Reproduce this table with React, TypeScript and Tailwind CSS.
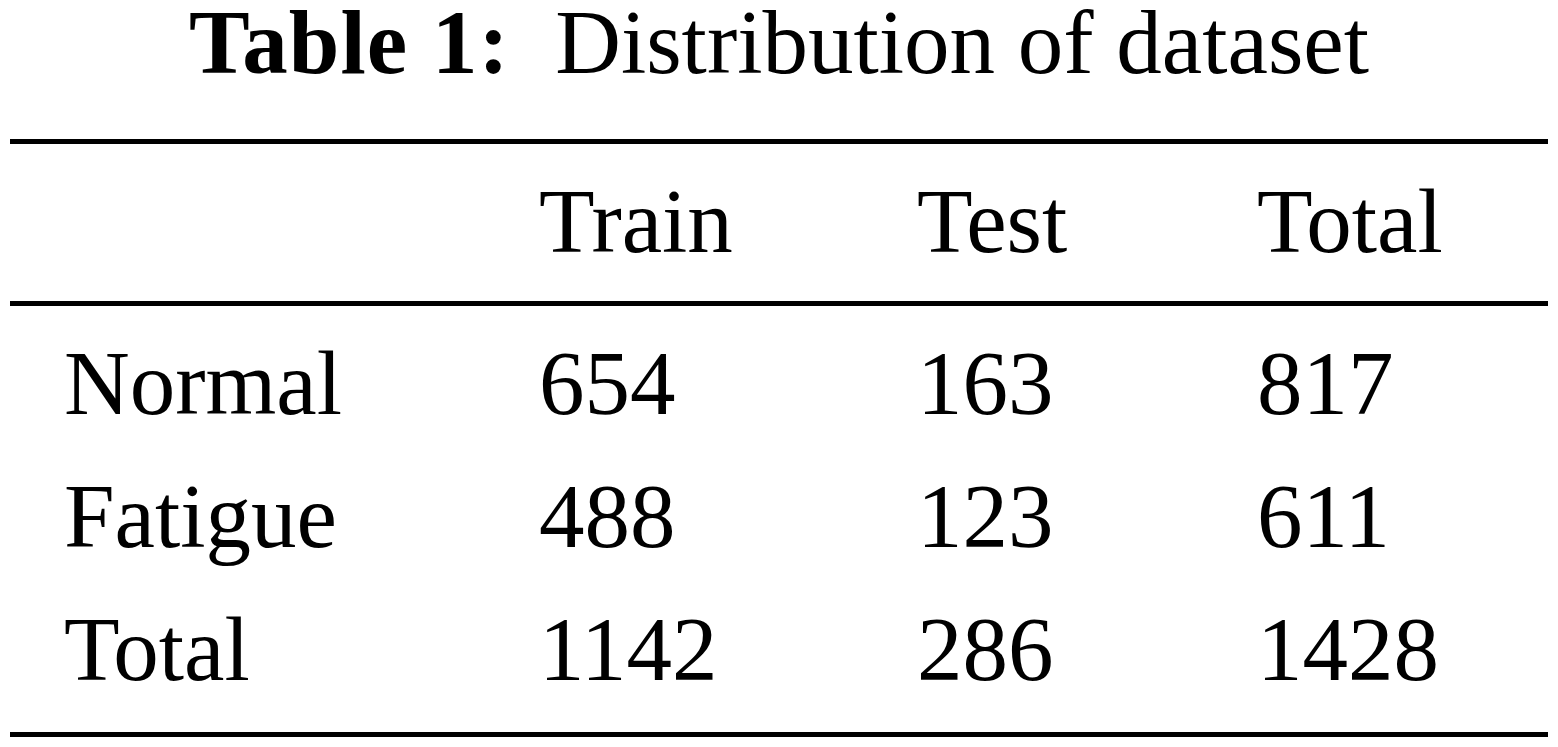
const header = ["Train", "Test", "Total"];

const rows = [
  { label: "Normal", values: ["654", "163", "817"] },
  { label: "Fatigue", values: ["488", "123", "611"] },
  { label: "Total", values: ["1142", "286", "1428"] },
];

export default function App() {
  return (
    <div className="w-[1558px] h-[747px] bg-white text-black overflow-hidden font-['Liberation_Serif','Times_New_Roman',serif]">
      <h1 className="text-center text-[91px] leading-[85px] whitespace-pre">
        <span className="font-bold tracking-[1px]">Table 1:</span>
        {"  "}Distribution of dataset
      </h1>

      <div className="mx-[10px] mt-[54px] border-t-[5px] border-black" />

      <div className="pt-[11px] pb-[13px]">
        <div className="grid grid-cols-[475px_378px_340px_1fr] pl-[64px] text-[91px] leading-[133px]">
          <div />
          {header.map((h) => (
            <div key={h}>{h}</div>
          ))}
        </div>
      </div>

      <div className="mx-[10px] border-t-[5px] border-black" />

      <div className="pt-[11px] pb-[16px]">
        {rows.map((row) => (
          <div
            key={row.label}
            className="grid grid-cols-[475px_378px_340px_1fr] pl-[64px] text-[91px] leading-[133px]"
          >
            <div>{row.label}</div>
            {row.values.map((v, i) => (
              <div key={i}>{v}</div>
            ))}
          </div>
        ))}
      </div>

      <div className="mx-[10px] border-t-[5px] border-black" />
    </div>
  );
}
